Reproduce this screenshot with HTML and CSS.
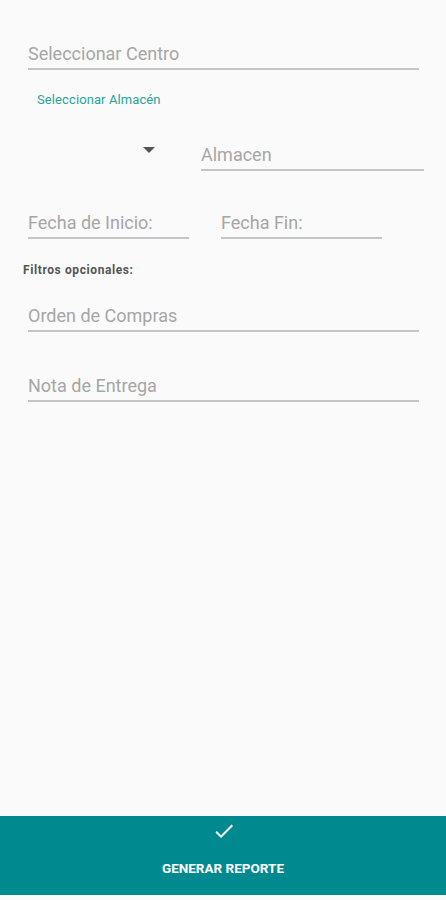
FILE: index.html
```html
<!DOCTYPE html>
<html lang="es">
<head>
    <meta charset="UTF-8">
    <meta name="viewport" content="width=device-width, initial-scale=1.0">
    <title>Generar Reporte</title>
    <link rel="stylesheet" href="styles.css">
</head>
<body>
    <div class="screen">
        <div class="form">
            <div class="field field-centro">Seleccionar Centro</div>

            <div class="section-label">Seleccionar Almacén</div>

            <div class="row row-almacen">
                <div class="spinner">
                    <span class="arrow"></span>
                </div>
                <div class="field field-almacen">Almacen</div>
            </div>

            <div class="row row-fechas">
                <div class="field field-fecha">Fecha de Inicio:</div>
                <div class="field field-fecha">Fecha Fin:</div>
            </div>

            <div class="filters-label">Filtros opcionales:</div>

            <div class="field field-orden">Orden de Compras</div>
            <div class="field field-nota">Nota de Entrega</div>
        </div>

        <div class="action-bar">
            <svg class="check" width="24" height="24" viewBox="0 0 24 24">
                <path d="M9 16.17L4.83 12l-1.42 1.41L9 19 21 7l-1.41-1.41z" fill="#ffffff"/>
            </svg>
            <span class="action-text">GENERAR REPORTE</span>
        </div>
    </div>
</body>
</html>
```

FILE: styles.css
```css
* {
    box-sizing: border-box;
    margin: 0;
    padding: 0;
}

body {
    font-family: Roboto, "Noto Sans", Arial, sans-serif;
    background-color: #fafafa;
}

.screen {
    height: 900px;
    display: flex;
    flex-direction: column;
}

.form {
    flex: 1;
    padding: 43px 27px 0 28px;
}

.field {
    font-size: 18px;
    line-height: 22px;
    color: #a6a6a6;
    padding-bottom: 3px;
    border-bottom: 2px solid #c4c4c4;
}

.section-label {
    margin: 22px 0 0 9px;
    font-size: 13px;
    line-height: 16px;
    color: #26a69a;
    letter-spacing: 0.1px;
}

.row {
    display: flex;
}

.row-almacen {
    margin-top: 36px;
}

.spinner {
    width: 173px;
    padding: 3px 0 0 115px;
}

.arrow {
    display: block;
    width: 0;
    height: 0;
    border-left: 6px solid transparent;
    border-right: 6px solid transparent;
    border-top: 6px solid #555555;
}

.field-almacen {
    flex: 1;
    margin-right: -5px;
}

.row-fechas {
    margin-top: 41px;
    gap: 32px;
}

.field-fecha {
    width: 161px;
}

.filters-label {
    margin: 23px 0 0 -5px;
    font-size: 12px;
    line-height: 16px;
    font-weight: bold;
    color: #555555;
    letter-spacing: 0.6px;
}

.field-orden {
    margin-top: 27px;
}

.field-nota {
    margin-top: 43px;
}

.action-bar {
    height: 79px;
    margin-bottom: 5px;
    background-color: #00898f;
    display: flex;
    flex-direction: column;
    align-items: center;
    padding-top: 3px;
}

.check {
    margin-left: 1px;
}

.action-text {
    margin-top: 17px;
    font-size: 13.5px;
    font-weight: bold;
    color: #ffffff;
}
```
